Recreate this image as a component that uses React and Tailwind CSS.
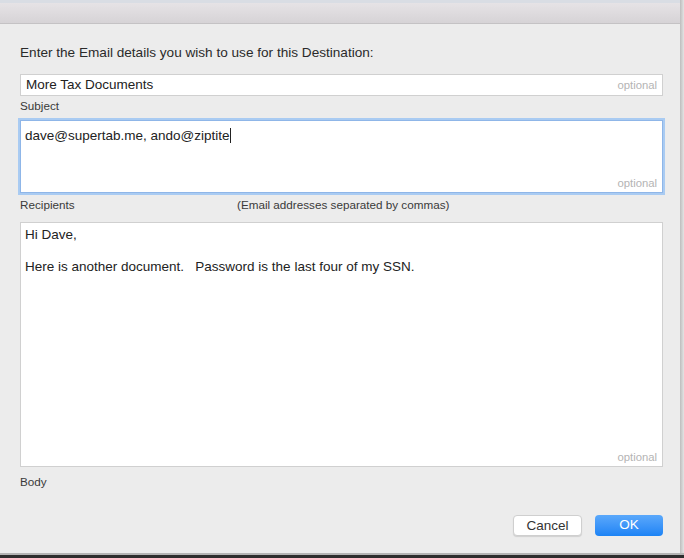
import React from "react";

const font = { fontFamily: '"Liberation Sans", Arial, sans-serif' };

const Optional = () => (
  <span className="absolute right-[5px] bottom-[2px] text-[11.3px] text-[#b4b4b4] leading-none pb-[1px]">
    optional
  </span>
);

export default function App() {
  return (
    <div className="w-[684px] h-[558px] flex flex-col bg-[#3c3c3c] overflow-hidden" style={font}>
      <div className="flex flex-1 min-h-0">
        <div className="flex-1 flex flex-col bg-[#ececec]">
          {/* title bar */}
          <div className="h-[3px] bg-[#d9dde4]" />
          <div className="h-[21px] bg-gradient-to-b from-[#e6e3e6] to-[#d6d3d6] border-b border-[#c4c2c4]" />

          <div className="flex-1 flex flex-col pl-[20px] pr-[17px] pt-[22px]">
            <p className="text-[13.6px] text-[#2a2a2a] leading-none">
              Enter the Email details you wish to use for this Destination:
            </p>

            <div className="relative mt-[14px] h-[22px] bg-white border border-[#d0d0d0] px-[5px] pt-[2px] flex items-center">
              <span className="text-[13.5px] text-[#222]">More Tax Documents</span>
              <Optional />
            </div>
            <p className="mt-[4px] text-[11.7px] text-[#3a3a3a] leading-none">Subject</p>

            <div className="relative mt-[9px] h-[73px] bg-white border border-[#8fb6e8] ring-[2px] ring-[#a9cbf2] px-[4px] pt-[2px]">
              <span className="text-[13.5px] text-[#222]">
                dave@supertab.me, ando@ziptite
              </span>
              <span className="inline-block w-px h-[15px] bg-[#222] align-[-3px]" />
              <Optional />
            </div>
            <div className="mt-[6px] flex text-[11.7px] text-[#3a3a3a] leading-none">
              <span className="w-[217px]">Recipients</span>
              <span>(Email addresses separated by commas)</span>
            </div>

            <div className="relative mt-[11px] h-[245px] bg-white border border-[#d0d0d0] px-[4px] pt-[4px] text-[13.5px] text-[#222] leading-[16px]">
              <p>Hi Dave,</p>
              <p className="mt-[16px] whitespace-pre">Here is another document.   Password is the last four of my SSN.</p>
              <Optional />
            </div>
            <p className="mt-[9px] text-[11.7px] text-[#3a3a3a] leading-none">Body</p>

            <div className="mt-auto mb-[17px] flex justify-end gap-[13px]">
              <button className="w-[69px] h-[21px] rounded-[4px] bg-white border border-[#cfcfcf] shadow-[0_1px_1px_rgba(0,0,0,0.12)] text-[13.5px] text-[#333]">
                Cancel
              </button>
              <button className="w-[68px] h-[21px] rounded-[4px] bg-gradient-to-b from-[#5aa8fb] to-[#1a83f5] text-[13.5px] text-white">
                OK
              </button>
            </div>
          </div>
        </div>
        <div className="w-[4px] bg-gradient-to-r from-[#bdbdbd] to-[#e4e4e4]" />
      </div>
      <div className="h-[2px] bg-[#b4b4b4]" />
      <div className="h-[3px] bg-[#2d2d2d]" />
    </div>
  );
}
